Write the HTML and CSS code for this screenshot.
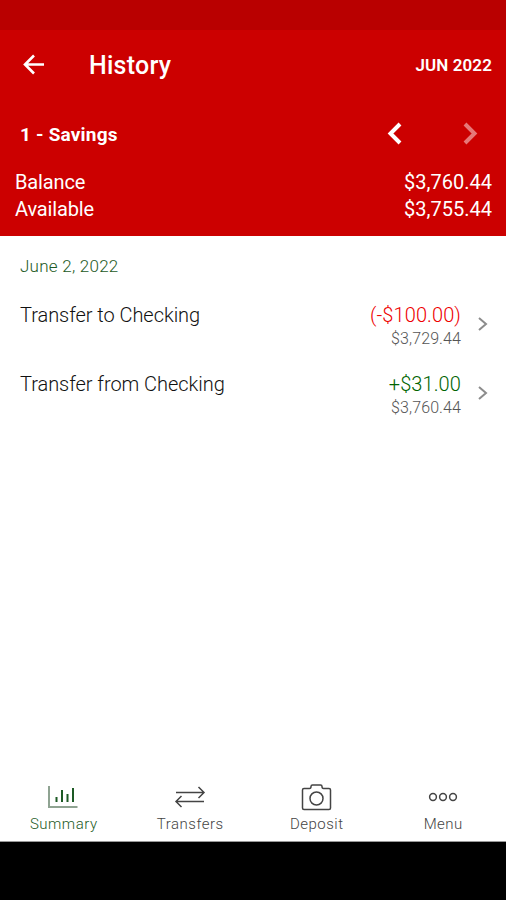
FILE: index.html
```html
<!DOCTYPE html>
<html lang="en">
<head>
<meta charset="UTF-8" />
<meta name="viewport" content="width=device-width, initial-scale=1" />
<title>History</title>
<link rel="stylesheet" href="styles.css">
</head>
<body>
  <div id="app">

    <div class="status-bar"></div>

    <header>
      <div class="title-bar">
        <button class="icon-btn" aria-label="Back">
          <svg width="22" height="22" viewBox="0 0 22 22"><path d="M21 10.500H2M11 1.500L2 10.500l9 9" /></svg>
        </button>
        <h1>History</h1>
        <span class="month">JUN 2022</span>
      </div>

      <div class="account-bar">
        <h2>1 - Savings</h2>
        <button class="icon-btn" aria-label="Previous account">
          <svg width="16" height="24" viewBox="0 0 16 24"><path class="thick" d="M13 2L3.500 11.500l9.500 9.500" /></svg>
        </button>
        <button class="icon-btn next" aria-label="Next account" disabled>
          <svg width="16" height="24" viewBox="0 0 16 24"><path class="thick" d="M3 2l9.500 9.500L3 21" /></svg>
        </button>
      </div>

      <div class="totals">
        <div class="total-row"><span class="total-label">Balance</span><span>$3,760.44</span></div>
        <div class="total-row"><span class="total-label">Available</span><span>$3,755.44</span></div>
      </div>
    </header>

    <main>
      <h3>June 2, 2022</h3>

      <div class="transaction">
        <span class="description">Transfer to Checking</span>
        <div class="amounts">
          <span class="amount debit">(-$100.00)</span>
          <span class="running">$3,729.44</span>
        </div>
        <svg class="chevron" width="12" height="16" viewBox="0 0 12 16"><path d="M2 2l7 6-7 6" /></svg>
      </div>

      <div class="transaction">
        <span class="description">Transfer from Checking</span>
        <div class="amounts">
          <span class="amount credit">+$31.00</span>
          <span class="running">$3,760.44</span>
        </div>
        <svg class="chevron" width="12" height="16" viewBox="0 0 12 16"><path d="M2 2l7 6-7 6" /></svg>
      </div>
    </main>

    <nav>
      <a class="tab active">
        <svg width="32" height="28" viewBox="0 0 32 28">
          <path class="axis" d="M2 3v21H30.500" />
          <path class="bars" d="M9.500 14v5M15 7v12M20.500 11v8M26 5v14" />
        </svg>
        <span>Summary</span>
      </a>
      <a class="tab">
        <svg width="32" height="28" viewBox="0 0 32 28">
          <path d="M2 9.500h28M24.500 4l5.500 5.500-5.500 5.500" />
          <path d="M30 18.500H2M7.500 13L2 18.500 7.500 24" />
        </svg>
        <span>Transfers</span>
      </a>
      <a class="tab">
        <svg width="32" height="28" viewBox="0 0 32 28">
          <path d="M4 5.500H9.500q1.500 0 1.500-2 0-1.500 1.500-1.500h8q1.500 0 1.500 1.500 0 2 1.500 2h5.500q1.500 0 1.500 1.500v18q0 1.500-1.500 1.500h-25q-1.500 0-1.500-1.500v-18q0-1.500 1.500-1.500z" />
          <circle cx="16.500" cy="15.500" r="6.500" />
        </svg>
        <span>Deposit</span>
      </a>
      <a class="tab">
        <svg width="32" height="28" viewBox="0 0 32 28">
          <circle cx="6" cy="14" r="3.400" />
          <circle cx="16" cy="14" r="3.400" />
          <circle cx="26" cy="14" r="3.400" />
        </svg>
        <span>Menu</span>
      </a>
    </nav>

    <div class="system-bar"></div>

  </div>
</body>
</html>
```
FILE: styles.css
```css
*, *::before, *::after {
  box-sizing: border-box;
}
html, body {
  margin: 0;
  height: 100%;
}
body {
  font-family: Roboto, sans-serif;
  background: #fff;
  color: #111;
}
#app {
  height: 900px;
  display: flex;
  flex-direction: column;
  overflow: hidden;
}
h1, h2, h3 {
  margin: 0;
}
svg {
  display: block;
  fill: none;
  stroke: currentColor;
}

.status-bar {
  height: 30px;
  background: #b90000;
}

/* Red header */
header {
  height: 206px;
  background: #cc0000;
  color: #fff;
}
.title-bar {
  display: flex;
  align-items: center;
  height: 70px;
  padding: 0 14px 0 23px;
}
.icon-btn {
  padding: 0;
  border: none;
  background: none;
  color: #fff;
  stroke-width: 2.6;
}
.icon-btn.next {
  margin-left: 59px;
  color: #e67878;
}
.thick {
  stroke-width: 4;
}
h1 {
  margin-left: 44px;
  font-size: 25px;
  font-weight: 500;
  letter-spacing: 0.25px;
}
.month {
  margin-left: auto;
  font-size: 17px;
  font-weight: 600;
  letter-spacing: 0.1px;
}
.account-bar {
  display: flex;
  align-items: center;
  height: 68px;
  padding: 0 28px 0 20px;
}
h2 {
  flex: 1;
  font-size: 19px;
  font-weight: 700;
  letter-spacing: 0.2px;
}
.totals {
  padding: 1px 14px 0 15px;
}
.total-row {
  display: flex;
  justify-content: space-between;
  font-size: 20px;
  line-height: 27px;
}
.total-label {
  letter-spacing: -0.15px;
}

/* Transactions */
main {
  flex: 1;
  padding: 17px 17px 0 20px;
}
h3 {
  margin-bottom: 18px;
  font-size: 17px;
  line-height: 27px;
  font-weight: 300;
  letter-spacing: 0.25px;
  color: #1d5a25;
}
.transaction {
  display: flex;
  height: 68.500px;
  padding-top: 5px;
  font-weight: 300;
}
.description {
  flex: 1;
  font-size: 20px;
  line-height: 24px;
  letter-spacing: -0.05px;
}
.amounts {
  display: flex;
  flex-direction: column;
  align-items: flex-end;
}
.amount {
  font-size: 20px;
  line-height: 24px;
  letter-spacing: 0.1px;
}
.debit {
  color: #ee0000;
}
.credit {
  color: #006400;
}
.running {
  font-size: 16px;
  line-height: 24px;
  letter-spacing: 0.1px;
  color: #555;
}
.chevron {
  margin: 13px 0 0 16px;
  color: #8c8c8c;
  stroke-width: 2;
}

/* Bottom tabs */
nav {
  display: flex;
  height: 72px;
  padding-top: 13px;
  border-bottom: 1px solid #999;
}
.tab {
  flex: 1;
  display: flex;
  flex-direction: column;
  align-items: center;
  font-size: 15px;
  line-height: 26px;
  font-weight: 300;
  letter-spacing: 0.5px;
  color: #444;
  stroke-width: 1.5;
}
.tab span {
  padding-left: 1px;
}
.active {
  color: #1d5a25;
}
.axis {
  stroke: #8fa392;
  stroke-width: 2;
}
.bars {
  stroke-width: 2;
}
.system-bar {
  height: 58px;
  background: #000;
}
```
